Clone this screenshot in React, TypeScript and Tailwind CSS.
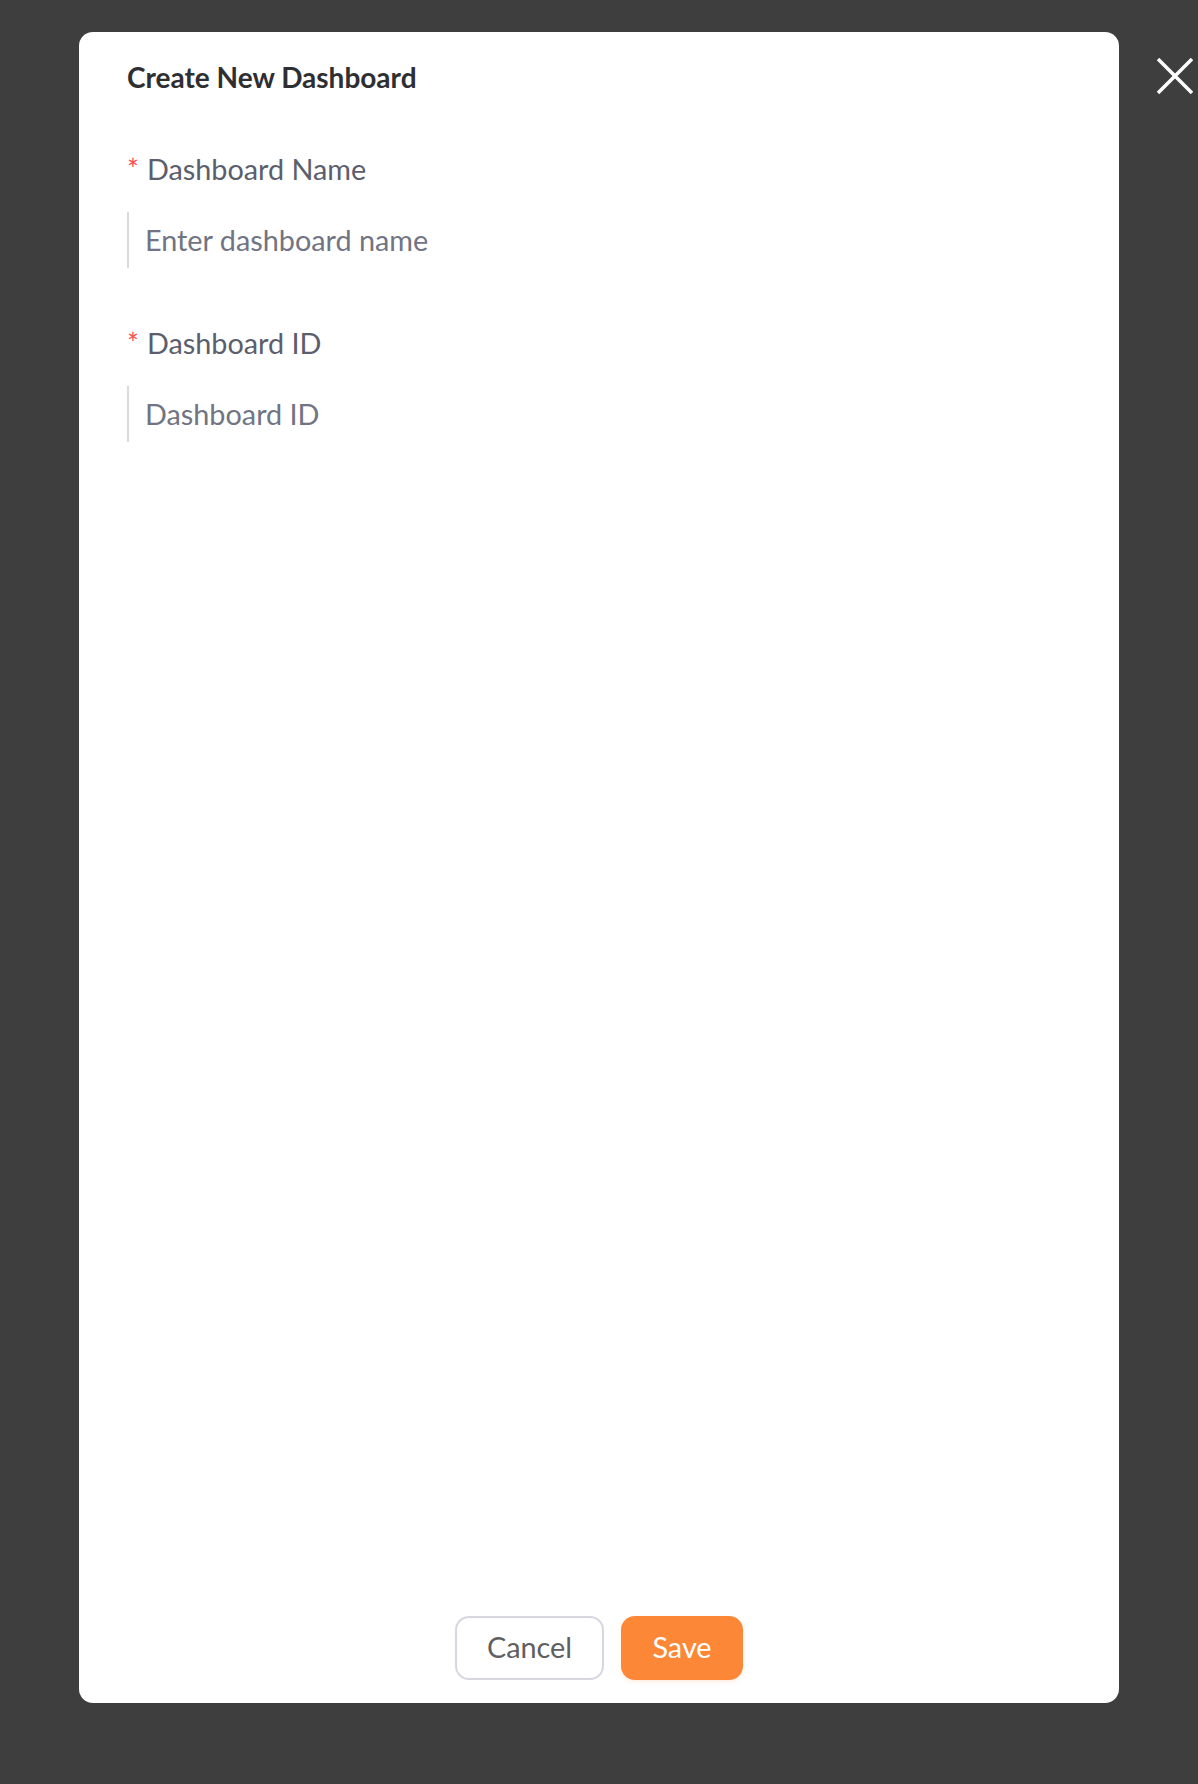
import React, { useState } from 'react'

const FONT = { fontFamily: 'Lato, "Open Sans", sans-serif' }

interface FieldProps {
  label: string
  placeholder: string
  value: string
  onChange: (v: string) => void
}

const Field: React.FC<FieldProps> = ({ label, placeholder, value, onChange }) => (
  <div className="mb-[56px]">
    <div className="flex items-center h-[40px] text-[28.8px] text-[#5b5e6c]">
      <span className="text-[#ff4d4f] text-[28px] mr-[8px] leading-none -mt-[2px]">*</span>
      {label}
    </div>
    <div className="mt-[22px] h-[56px] flex items-center border-l-2 border-[#d9d9de]">
      <input
        value={value}
        onChange={(e) => onChange(e.target.value)}
        placeholder={placeholder}
        className="w-full h-full pl-[16px] text-[28.8px] text-[#333] placeholder:text-[#717483] outline-none bg-transparent"
        style={FONT}
      />
    </div>
  </div>
)

export default function App() {
  const [name, setName] = useState('')
  const [id, setId] = useState('')

  return (
    <div className="relative w-[1198px] h-[1784px] bg-[#3e3e3e] pt-[32px] pl-[79px]" style={FONT}>
      {/* close */}
      <button className="absolute left-[1157px] top-[58px] w-[36px] h-[36px]">
        <svg viewBox="0 0 36 36" className="w-[36px] h-[36px]">
          <path d="M1 1 L35 35 M35 1 L1 35" stroke="#fff" strokeWidth="3.5" fill="none" />
        </svg>
      </button>

      {/* modal */}
      <div className="w-[1040px] h-[1671px] bg-white rounded-[14px] flex flex-col px-[48px] pt-[25px] pb-[23px]">
        <h2 className="h-[40px] leading-[40px] text-[28px] font-bold text-[#2e2f33]">Create New Dashboard</h2>

        <div className="mt-[53px] flex-1">
          <Field label="Dashboard Name" placeholder="Enter dashboard name" value={name} onChange={setName} />
          <Field label="Dashboard ID" placeholder="Dashboard ID" value={id} onChange={setId} />
        </div>

        <div className="flex justify-center gap-[17px]">
          <button className="w-[149px] h-[64px] rounded-[14px] border-2 border-[#d7d7e2] bg-white text-[28.8px] text-[#5f5f63]">
            Cancel
          </button>
          <button className="w-[122px] h-[64px] rounded-[14px] bg-[#fc8837] text-[28.8px] text-white shadow-[0_2px_4px_rgba(252,136,55,0.15)]">
            Save
          </button>
        </div>
      </div>
    </div>
  )
}
